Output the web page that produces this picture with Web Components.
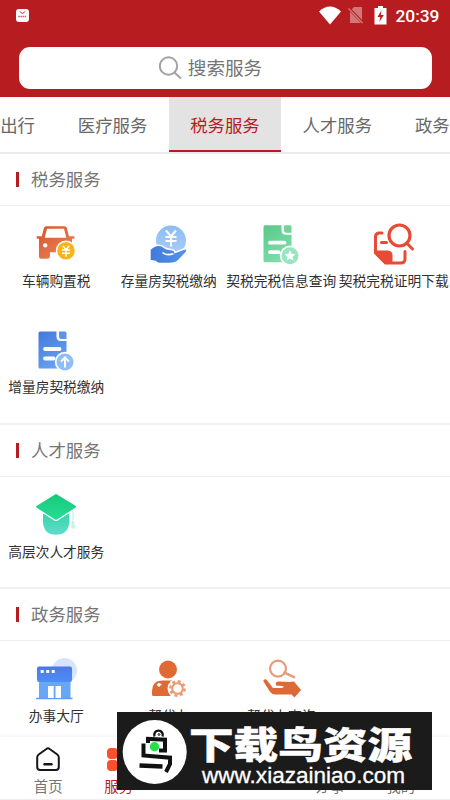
<!DOCTYPE html>
<html lang="zh-CN">
<head>
<meta charset="utf-8">
<title>服务</title>
<style>
html,body{margin:0;height:100%;overflow:hidden;background:#fff;font-family:"Noto Sans CJK SC",sans-serif}
</style>
</head>
<body>
<service-app></service-app>
<script>
const icons = {
car:`<g transform="translate(0 2.200)"><defs><linearGradient id="a" x2="1" y2="1"><stop stop-color="#d94f28"/><stop offset="1" stop-color="#ea8e61"/></linearGradient></defs>
<path fill="url(#a)" fill-rule="evenodd" d="M8 3.500Q8.500 2 10.300 2H28.500Q30.300 2 30.800 3.500L33 12H37.500Q38.700 12 38.700 13.200T37.500 14.500H36V28H14V31.500Q14 34.500 11.500 34.500H5Q3 34.500 3 32.500V14.500H1.700Q.5 14.500.5 13.200T1.700 12H5.800ZM11 4.500L8.700 13.500H30.300L28 4.500ZM9.200 19a2.200 2.200 0 1 0 .01 0Z"/><circle cx="30" cy="26.500" r="10.200" fill="#fff"/><circle cx="30" cy="26.500" r="8.800" fill="#f7b51b"/><path d="M26.800 21.500L30 25.500 33.200 21.500M26 25.800H34M26 29H34M30 25.500V32.500" fill="none" stroke="#fff" stroke-width="1.500"/></g>`,
hand:`<g transform="translate(-1 4.500)"><defs><linearGradient id="a" y2="1" x2="0"><stop stop-color="#8dbdf4"/><stop offset="1" stop-color="#a9cef7"/></linearGradient><linearGradient id="b" x2="1"><stop stop-color="#417ad9"/><stop offset="1" stop-color="#5693e9"/></linearGradient></defs><circle cx="23" cy="14" r="15" fill="url(#a)"/><path d="M18 4L23 10 28 4M17.500 10.500H28.500M17.500 14.500H28.500M23 10V20" fill="none" stroke="#fff" stroke-width="2"/><path d="M2 23Q10 15.500 17 21.500C22 24 27 22 27 26L36 22.500C38.500 21.500 40 24 38 26L31 33.500Q28 37 21 37H12Q10 37 7.500 35L2 34Z" fill="url(#b)" stroke="#fff" stroke-width="1.400"/><path d="M14.500 26Q18 29.500 25.500 27.300" fill="none" stroke="#fff" stroke-width="1.600"/></g>`,
docstar:`<g transform="translate(0 3.200)"><defs><linearGradient id="a" x2=".5" y2="1"><stop stop-color="#58c98a"/><stop offset="1" stop-color="#7edda8"/></linearGradient></defs><path d="M4 0H20.500V5Q20.500 9.500 25 9.500H30.500V37H4Q2.500 37 2.500 35.500V1.500Q2.500 0 4 0Z" fill="url(#a)"/><path d="M23 0H29Q30.500 0 30.500 1.500V7.500H25.500Q23 7.500 23 5Z" fill="#70d59b"/><path d="M9 17.500H23.500M9 27H17.500" stroke="#fff" stroke-width="3.800" stroke-linecap="round"/><circle cx="29" cy="30.500" r="10.200" fill="#fff"/><circle cx="29" cy="30.500" r="8.500" fill="#99e4c3"/><path d="M29 25L30.600 28.600 34.500 29 31.600 31.500 32.500 35.300 29 33.300 25.500 35.300 26.400 31.500 23.500 29 27.400 28.600Z" fill="#fff"/></g>`,
docup:`<g transform="translate(0 3.500)"><defs><linearGradient id="a" x2=".5" y2="1"><stop stop-color="#4379db"/><stop offset="1" stop-color="#65a1ef"/></linearGradient></defs><path d="M4 0H20.500V5Q20.500 9.500 25 9.500H30.500V37H4Q2.500 37 2.500 35.500V1.500Q2.500 0 4 0Z" fill="url(#a)"/><path d="M23 0H29Q30.500 0 30.500 1.500V7.500H25.500Q23 7.500 23 5Z" fill="#5b94eb"/><path d="M9 17.500H23.500M9 27H17.500" stroke="#fff" stroke-width="3.800" stroke-linecap="round"/><circle cx="29" cy="30.500" r="10.200" fill="#fff"/><circle cx="29" cy="30.500" r="8.500" fill="#8fbdf5"/><path d="M29 36V26.500M25 30L29 26 33 30" fill="none" stroke="#fff" stroke-width="2"/></g>`,
docsearch:`<g transform="translate(-.5 2)"><g fill="none" stroke="#e84b35" stroke-width="3" stroke-linecap="round"><path d="M8.500 9H6Q2 9 2 13V29L12 39H27Q31.500 39 31.500 35V27.500M8 18.500H13"/><circle cx="26" cy="11.500" r="10.500" stroke-width="3.200"/><path d="M33.500 19.500L39 25"/></g><path d="M2 26.500H14.500Q19 27 19 31V39H12L2 29Z" fill="#e84b35"/></g>`,
cap:`<g transform="translate(0 -.3)"><defs><linearGradient id="a" x2="0" y2="1"><stop stop-color="#18c87b"/><stop offset="1" stop-color="#25df94"/></linearGradient><linearGradient id="b" x2="0" y2="1"><stop stop-color="#35d6a4"/><stop offset="1" stop-color="#60dbcf"/></linearGradient></defs><path d="M7 20L20 27 33.300 20V29Q32.500 42 20 42T7 29Z" fill="url(#b)"/><path d="M1 12.300L18.600 1.300Q20 .4 21.400 1.300L39.500 12.300Q42 14 39.500 15.700L21.400 27.300Q20 28.200 18.600 27.300L.5 15.700Q-2 14 1 12.300Z" fill="url(#a)" stroke="#fff" stroke-width="1.300"/><path d="M37 18.500V27M37 28L35.500 34Q37 37.500 38.500 34Z" fill="#c5f5e8" stroke="#c5f5e8" stroke-width="1.300"/></g>`,
hall:`<g transform="translate(0 1)"><defs><linearGradient id="a" x2="0" y2="1"><stop stop-color="#4c78e9"/><stop offset="1" stop-color="#4e8df5"/></linearGradient></defs><circle cx="28.500" cy="12.500" r="12.500" fill="#d5e5fd"/><path d="M3 24H34.500V40H3Z" fill="#66a7f7"/><path d="M0 40.500H36.500" stroke="#5b9df8" stroke-width="1.700"/><rect x="1" y="8.500" width="35" height="15.500" rx="2" fill="url(#a)"/><path d="M12 28H17.700V40H12ZM19.500 28H25V40H19.500Z" fill="#fff"/><path d="M4.700 12H7.700V15H4.700ZM10.200 12H13.200V15H10.200ZM15.700 12H18.700V15H15.700Z" fill="#fff"/></g>`,
agent:`<g transform="translate(1 3)"><circle cx="18" cy="9.500" r="9" fill="#df6a34"/><path d="M2 31Q2 20.500 12 20.500H23.500L19 30 21 36H3.500Q2 36 2 34.500Z" fill="#df6a34"/><path d="M8.500 22.800L12 24.200 9 27 6.600 25Z" fill="#fff"/><circle cx="27.500" cy="28.500" r="10" fill="#fff"/><g fill="none" stroke="#ea9972"><circle cx="27.500" cy="28.500" r="7.200" stroke-width="2.400" stroke-dasharray="3 2.650"/><circle cx="27.500" cy="28.500" r="5.300" stroke-width="2"/></g></g>`,
query:`<g transform="translate(-1 2.600)" ><g fill="none" stroke="#e99a76"><circle cx="18" cy="9" r="8" stroke-width="2.200"/><path d="M24.500 13L34 17.500" stroke-width="2.500" stroke-linecap="round"/></g><path d="M3.500 20.300Q5.500 18.500 7.200 21L13 28.500H22Q25.500 26.500 22 26.500L16 25.800Q15 22.300 18.500 22L29 22.500 34 22 41 30.500 34.500 38 31.500 35H15Q12 35 9.500 31.500L3.500 22Z" fill="#df6837"/></g>`
};
const define=(n,html,setup)=>{
 const t=document.createElement('template');t.innerHTML=html;
 customElements.define(n,class extends HTMLElement{
  connectedCallback(){ if(this.shadowRoot)return; const r=this.attachShadow({mode:'open'});r.append(t.content.cloneNode(true)); if(setup)setup(this,r); }
 });
};
define('status-bar',`<style>
:host{display:flex;height:30px;padding:0 10.500px 0 16px;align-items:center;color:#fff;box-sizing:border-box}
.s{flex:1}.w{margin-right:7px}.n{margin-right:10.500px}.b{margin-right:8px}
svg{display:block}span{font:500 17.400px/30px Roboto,sans-serif;padding-top:2px}
</style>
<svg width="13" height="13"><rect width="13" height="13" rx="3" fill="#fff"/><path d="M4 2.500Q6.500 6 9 2.500" fill="none" stroke="#b71c20"/><path d="M2.300 7.500H10.700" stroke="#cf5a60" stroke-width="1.500" stroke-dasharray="1.500 .6"/></svg>
<div class="s"></div>
<svg class="w" width="22" height="19"><path d="M0 5.500Q11 -4.500 22 5.500L11 18.500Z" fill="#fff"/></svg>
<svg class="n" width="16" height="18"><path d="M6 1H14V17H2V5Z" fill="#d1777a"/><path d="M0 1.500L15 17" stroke="#b71c20" stroke-width="3"/><path d="M.5 2.500L14.500 17" stroke="#d1777a" stroke-width="1.500"/></svg>
<svg class="b" width="13" height="19"><path d="M4 0H9V2H12.500V18.500H.5V2H4Z" fill="#fff"/><path d="M7.500 4.500L3.500 11H6.300L5.300 16 9.800 9H6.800Z" fill="#b71c20"/></svg>
<span>20:39</span>`);
define('search-box',`<style>
:host{display:flex;margin:16.500px 18.500px 8.500px;height:42px;border-radius:11px;background:#fff;align-items:center;justify-content:center;gap:6px;color:#757575;font-size:18.600px;line-height:42px;padding-right:29px}
span{margin-top:-1px}
</style><svg width="23" height="24" fill="none" stroke="#a2a2a2" stroke-width="2"><circle cx="9.500" cy="10" r="8.700"/><path d="M15.500 16.500L22 22.500"/></svg><span><slot></slot></span>`);
define('tab-strip',`<style>
:host{display:flex;height:57px;box-sizing:border-box;border-bottom:2px solid #ececec;overflow:hidden}
div{display:flex;margin-left:-56px}
::slotted(span){flex:none;width:112.400px;box-sizing:border-box;height:55px;line-height:55px;text-align:center;color:#686868;font-size:17.400px}
::slotted(.on){color:#b71c20;background:#e3e3e3;border-bottom:2.500px solid #b71c20}
</style><div><slot></slot></div>`);
define('service-item',`<style>
:host{display:flex;flex-direction:column;align-items:center;height:106px;box-sizing:border-box;min-width:0}
svg{display:block;overflow:visible;margin-top:16.500px;flex:none}
span{font-size:13.720px;line-height:20px;margin-top:5.700px;white-space:nowrap;color:#303030}
</style><svg width="40" height="42"></svg><span><slot></slot></span>`,(el,r)=>{r.querySelector('svg').innerHTML=icons[el.getAttribute('icon')]});
define('service-section',`<style>
:host{display:block;box-sizing:border-box;border-bottom:2px solid #f0f0f0}
h2{margin:0;display:flex;align-items:center;gap:12px;padding-left:16px;height:51.500px;box-sizing:border-box;border-bottom:1.500px solid #eee;font-size:17.400px;font-weight:400;color:#757575;line-height:50px}
i{width:3px;height:15px;background:#b71c20}
div{display:grid;grid-template-columns:repeat(4,112.500px)}
</style><h2><i></i><span></span></h2><div><slot></slot></div>`,(el,r)=>{r.querySelector('span').textContent=el.getAttribute('name')});
define('bottom-nav',`<style>
:host{position:absolute;left:0;right:0;top:737px;height:63px;background:#fff;box-shadow:0 -1px 4px #0000000d;display:grid;grid-template-columns:repeat(6,70.500px);padding-left:13px;border-bottom:1px solid #eee;box-sizing:border-box}
div{display:flex;flex-direction:column;align-items:center;color:#757575;font-size:14.400px;line-height:20px}
svg{margin-top:9px;height:27px;width:28px;margin-bottom:3px}
.on{color:#b71c20}.d{grid-column:5}.e{grid-column:6}
</style>
<div><svg viewBox="0 0 28 27"><path d="M14 2.300Q14.800 2.300 16 3.200L23 8.200Q24.800 9.500 24.800 11.500V21Q24.800 24 21.800 24H6.200Q3.200 24 3.200 21V11.500Q3.200 9.500 5 8.200L12 3.200Q13.200 2.300 14 2.300Z" fill="none" stroke="#171717" stroke-width="2"/><path d="M10.500 18.300H17.500" stroke="#171717" stroke-width="2.400" stroke-linecap="round"/></svg><span>首页</span></div>
<div class="on"><svg viewBox="0 0 28 27" fill="#fa502d"><rect x="2" y="2" width="11" height="11" rx="4"/><rect x="2" y="14" width="11" height="11" rx="4"/><rect x="14" y="2" width="11" height="11" rx="4"/><rect x="14" y="14" width="11" height="11" rx="4"/></svg><span>服务</span></div>
<div class="d"><svg></svg><span>办事</span></div><div class="e"><svg></svg><span>我的</span></div>`);
define('site-badge',`<style>:host{position:absolute;left:117px;top:712px;width:315px;height:78px;background:#1b1b1b}svg{display:block}</style>
<svg width="315" height="78"><circle cx="37.700" cy="40" r="32" fill="#fff"/>
<g fill="none" stroke="#111" stroke-width="4"><path d="M29 26.700L48 27.700V38.500H42"/><path d="M31 26V31M26.500 31.500V43.500L53 45.700V52L49 60"/><path d="M22.500 53.500L45.500 54.500" stroke-width="4.600"/><path d="M37.500 24.500A4.300 4.300 0 1 1 45.500 24.500" stroke-width="2.300"/><circle cx="42" cy="22.500" r=".9" stroke-width="1"/></g><circle cx="37.500" cy="34.700" r="4.700" fill="#25df4b"/>
<text x="72" y="47" fill="#fff" stroke="#fff" stroke-width=".5" font-family="Noto Sans CJK SC,sans-serif" font-weight="900" font-size="37" textLength="223" lengthAdjust="spacingAndGlyphs">下载鸟资源</text>
<text x="85" y="70.500" fill="#fff" stroke="#fff" stroke-width=".3" font-family="Liberation Sans,sans-serif" font-size="21.500" textLength="203" lengthAdjust="spacingAndGlyphs">www.xiazainiao.com</text></svg>`);
define('service-app',`<style>
:host{display:block;position:relative;width:450px;height:800px;overflow:hidden;background:#fff}
header{background:#b71c20;height:97px;display:flow-root}
</style>
<header><status-bar></status-bar><search-box>搜索服务</search-box></header>
<tab-strip><span>交通出行</span><span>医疗服务</span><span class="on">税务服务</span><span>人才服务</span><span>政务服务</span></tab-strip>
<main>
<service-section name="税务服务" style="height:271px"><service-item icon="car">车辆购置税</service-item><service-item icon="hand">存量房契税缴纳</service-item><service-item icon="docstar">契税完税信息查询</service-item><service-item icon="docsearch">契税完税证明下载</service-item><service-item icon="docup">增量房契税缴纳</service-item></service-section>
<service-section name="人才服务" style="height:164px"><service-item icon="cap">高层次人才服务</service-item></service-section>
<service-section name="政务服务"><service-item icon="hall">办事大厅</service-item><service-item icon="agent">帮代办</service-item><service-item icon="query">帮代办查询</service-item></service-section>
</main>
<bottom-nav></bottom-nav><site-badge></site-badge>`);
</script>
</body>
</html>
